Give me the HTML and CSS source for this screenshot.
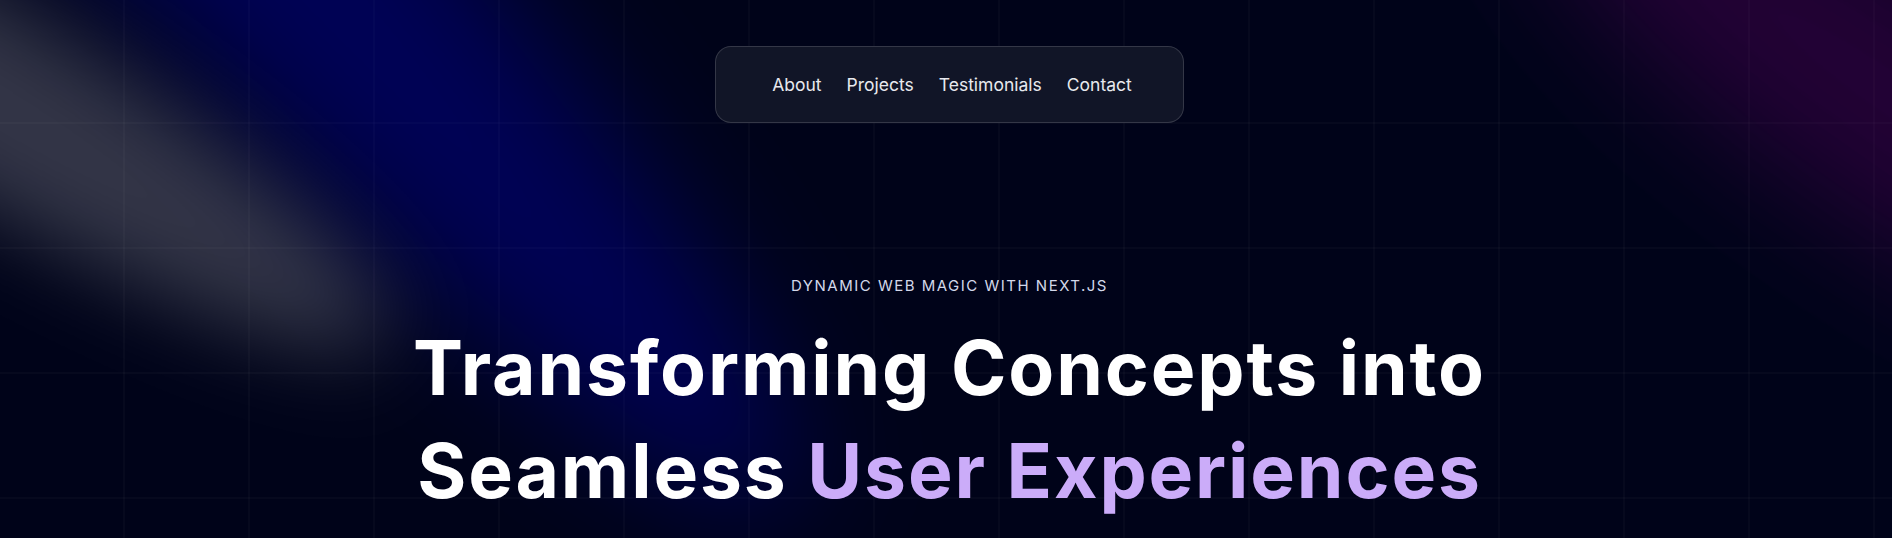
FILE: index.html
```html
<!DOCTYPE html>
<html lang="en">
<head>
<meta charset="utf-8">
<title>Hero</title>
<link rel="stylesheet" href="styles.css">
</head>
<body>
<div class="page">
  <svg class="spots" viewBox="0 0 1892 538" preserveAspectRatio="none" aria-hidden="true">
    <defs>
      <filter id="blurA" filterUnits="userSpaceOnUse" x="-1500" y="-1500" width="5000" height="4000">
        <feGaussianBlur stdDeviation="42"/>
      </filter>
      <filter id="blurB" filterUnits="userSpaceOnUse" x="-1500" y="-1500" width="5000" height="4000">
        <feGaussianBlur stdDeviation="60"/>
      </filter>
    </defs>
    <ellipse cx="200" cy="-150" rx="880" ry="140" transform="rotate(48 200 -150)" fill="#0000ff" fill-opacity="0.26" filter="url(#blurB)"/>
    <ellipse cx="-60" cy="72" rx="520" ry="95" transform="rotate(31 -60 72)" fill="#ffffff" fill-opacity="0.2" filter="url(#blurA)"/>
    <ellipse cx="1892" cy="95" rx="440" ry="125" transform="rotate(35 1892 95)" fill="#800080" fill-opacity="0.27" filter="url(#blurB)"/>
  </svg>

  <header class="nav-wrap">
    <nav class="nav">
      <a class="nav-link" href="#about">About</a>
      <a class="nav-link" href="#projects">Projects</a>
      <a class="nav-link" href="#testimonials">Testimonials</a>
      <a class="nav-link" href="#contact">Contact</a>
    </nav>
  </header>

  <main class="hero">
    <p class="eyebrow">Dynamic Web Magic with Next.js</p>
    <h1 class="title">
      <span class="line">Transforming Concepts into</span>
      <span class="line">Seamless <span class="accent">User Experiences</span></span>
    </h1>
  </main>
</div>
</body>
</html>
```

FILE: styles.css
```css
* {
  box-sizing: border-box;
}

html, body {
  margin: 0;
  padding: 0;
  background: #000319;
}

body {
  font-family: Inter, "Noto Sans", "Liberation Sans", sans-serif;
  color: #ffffff;
  overflow: hidden;
}

.page {
  position: relative;
  width: 100%;
  height: 538px;
  padding-left: 7px;
  overflow: hidden;
  background-color: #000319;
  background-image:
    linear-gradient(to right, rgba(255, 255, 255, 0.025) 2px, transparent 2px),
    linear-gradient(to bottom, rgba(255, 255, 255, 0.025) 2px, transparent 2px);
  background-size: 125px 125px;
  background-position: 123px 122px;
}

.spots {
  position: absolute;
  inset: 0;
  width: 100%;
  height: 100%;
  pointer-events: none;
  z-index: 0;
}

.nav-wrap {
  position: relative;
  z-index: 2;
  display: flex;
  justify-content: center;
  padding-top: 46px;
}

.nav {
  display: flex;
  align-items: center;
  gap: 25px;
  padding: 25px 51px 25px 56px;
  border-radius: 16px;
  background: #111527;
  border: 1px solid rgba(255, 255, 255, 0.15);
}

.nav-link {
  color: #e8e9ee;
  text-decoration: none;
  font-size: 17.5px;
  line-height: 25px;
}

.hero {
  position: relative;
  z-index: 1;
  display: flex;
  flex-direction: column;
  align-items: center;
  padding-top: 153px;
}

.eyebrow {
  margin: 0;
  font-size: 15px;
  line-height: 20px;
  letter-spacing: 0.1em;
  text-transform: uppercase;
  color: #d3d8ea;
}

.title {
  margin: 20px 0 0;
  font-size: 75px;
  line-height: 103px;
  font-weight: 700;
  letter-spacing: 0.025em;
  text-align: center;
}

.line {
  display: block;
}

.accent {
  color: #cbacf9;
}
```
